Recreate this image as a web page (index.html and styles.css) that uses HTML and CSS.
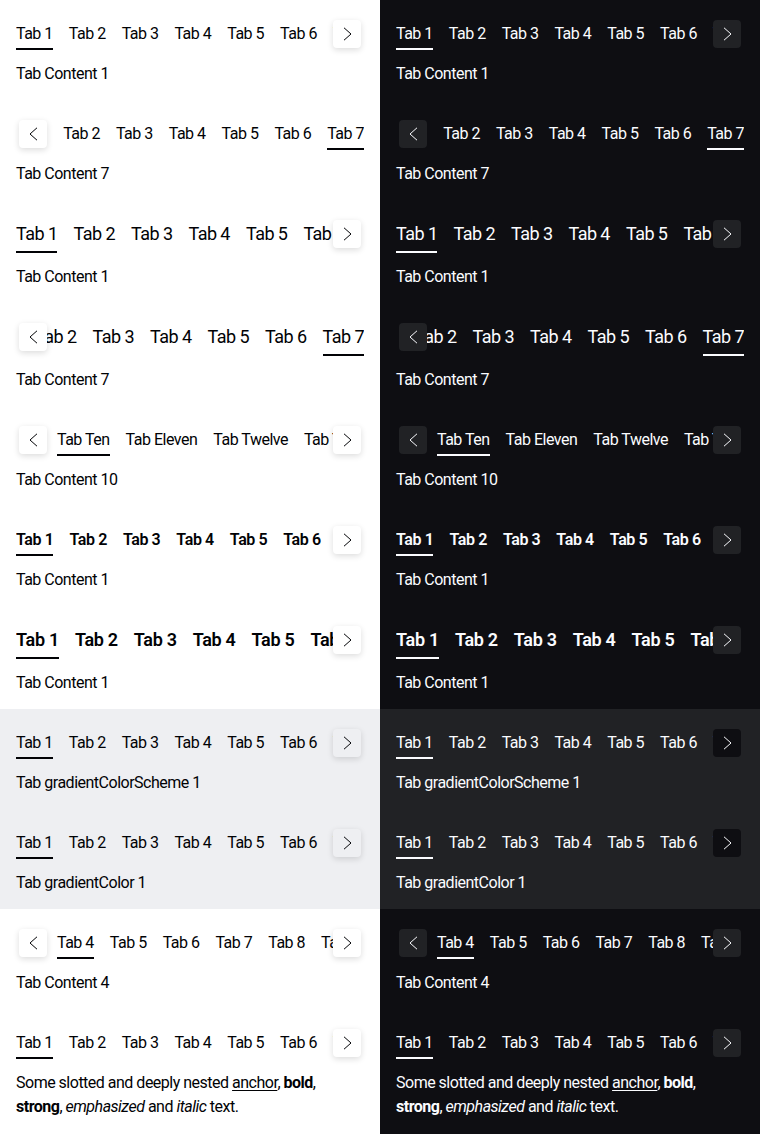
FILE: index.html
```html
<!DOCTYPE html>
<html lang="en">
<head>
<meta charset="utf-8">
<title>Tabs</title>
<link rel="stylesheet" href="styles.css">
</head>
<body>
<div class="page">
  <div class="col theme-light">
    <div class="band">
      <div class="demo">
        <div class="bar">
          <div class="scroller">
            <span class="tab active">Tab 1</span><span class="tab">Tab 2</span><span class="tab">Tab 3</span><span class="tab">Tab 4</span><span class="tab">Tab 5</span><span class="tab">Tab 6</span><span class="tab">Tab 7</span>
          </div>
          <div class="ind ind-next"><span class="btn"><svg width="9" height="14" viewBox="0 0 9 14"><polyline points="1,0.8 8,7 1,13.2" fill="none" stroke="currentColor" stroke-width="1"/></svg></span></div>
        </div>
        <div class="content">Tab Content 1</div>
      </div>
      <div class="demo">
        <div class="bar">
          <div class="scroller end">
            <span class="tab">Tab 1</span><span class="tab">Tab 2</span><span class="tab">Tab 3</span><span class="tab">Tab 4</span><span class="tab">Tab 5</span><span class="tab">Tab 6</span><span class="tab active">Tab 7</span>
          </div>
          <div class="ind ind-prev"><span class="btn"><svg width="9" height="14" viewBox="0 0 9 14"><polyline points="8,0.8 1,7 8,13.2" fill="none" stroke="currentColor" stroke-width="1"/></svg></span></div>
        </div>
        <div class="content">Tab Content 7</div>
      </div>
      <div class="demo">
        <div class="bar medium">
          <div class="scroller">
            <span class="tab active">Tab 1</span><span class="tab">Tab 2</span><span class="tab">Tab 3</span><span class="tab">Tab 4</span><span class="tab">Tab 5</span><span class="tab">Tab 6</span><span class="tab">Tab 7</span>
          </div>
          <div class="ind ind-next"><span class="btn"><svg width="9" height="14" viewBox="0 0 9 14"><polyline points="1,0.8 8,7 1,13.2" fill="none" stroke="currentColor" stroke-width="1"/></svg></span></div>
        </div>
        <div class="content">Tab Content 1</div>
      </div>
      <div class="demo">
        <div class="bar medium">
          <div class="scroller end">
            <span class="tab">Tab 1</span><span class="tab">Tab 2</span><span class="tab">Tab 3</span><span class="tab">Tab 4</span><span class="tab">Tab 5</span><span class="tab">Tab 6</span><span class="tab active">Tab 7</span>
          </div>
          <div class="ind ind-prev"><span class="btn"><svg width="9" height="14" viewBox="0 0 9 14"><polyline points="8,0.8 1,7 8,13.2" fill="none" stroke="currentColor" stroke-width="1"/></svg></span></div>
        </div>
        <div class="content">Tab Content 7</div>
      </div>
      <div class="demo">
        <div class="bar">
          <div class="scroller shifted">
            <span class="tab active">Tab Ten</span><span class="tab">Tab Eleven</span><span class="tab">Tab Twelve</span><span class="tab">Tab Thirteen</span>
          </div>
          <div class="ind ind-prev"><span class="btn"><svg width="9" height="14" viewBox="0 0 9 14"><polyline points="8,0.8 1,7 8,13.2" fill="none" stroke="currentColor" stroke-width="1"/></svg></span></div>
          <div class="ind ind-next"><span class="btn"><svg width="9" height="14" viewBox="0 0 9 14"><polyline points="1,0.8 8,7 1,13.2" fill="none" stroke="currentColor" stroke-width="1"/></svg></span></div>
        </div>
        <div class="content">Tab Content 10</div>
      </div>
      <div class="demo">
        <div class="bar semibold">
          <div class="scroller">
            <span class="tab active">Tab 1</span><span class="tab">Tab 2</span><span class="tab">Tab 3</span><span class="tab">Tab 4</span><span class="tab">Tab 5</span><span class="tab">Tab 6</span><span class="tab">Tab 7</span>
          </div>
          <div class="ind ind-next"><span class="btn"><svg width="9" height="14" viewBox="0 0 9 14"><polyline points="1,0.8 8,7 1,13.2" fill="none" stroke="currentColor" stroke-width="1"/></svg></span></div>
        </div>
        <div class="content">Tab Content 1</div>
      </div>
      <div class="demo">
        <div class="bar medium semibold">
          <div class="scroller">
            <span class="tab active">Tab 1</span><span class="tab">Tab 2</span><span class="tab">Tab 3</span><span class="tab">Tab 4</span><span class="tab">Tab 5</span><span class="tab">Tab 6</span><span class="tab">Tab 7</span>
          </div>
          <div class="ind ind-next"><span class="btn"><svg width="9" height="14" viewBox="0 0 9 14"><polyline points="1,0.8 8,7 1,13.2" fill="none" stroke="currentColor" stroke-width="1"/></svg></span></div>
        </div>
        <div class="content">Tab Content 1</div>
      </div>
    </div>
    <div class="band band-alt">
      <div class="demo">
        <div class="bar">
          <div class="scroller">
            <span class="tab active">Tab 1</span><span class="tab">Tab 2</span><span class="tab">Tab 3</span><span class="tab">Tab 4</span><span class="tab">Tab 5</span><span class="tab">Tab 6</span><span class="tab">Tab 7</span>
          </div>
          <div class="ind ind-next"><span class="btn"><svg width="9" height="14" viewBox="0 0 9 14"><polyline points="1,0.8 8,7 1,13.2" fill="none" stroke="currentColor" stroke-width="1"/></svg></span></div>
        </div>
        <div class="content">Tab gradientColorScheme 1</div>
      </div>
      <div class="demo">
        <div class="bar">
          <div class="scroller">
            <span class="tab active">Tab 1</span><span class="tab">Tab 2</span><span class="tab">Tab 3</span><span class="tab">Tab 4</span><span class="tab">Tab 5</span><span class="tab">Tab 6</span><span class="tab">Tab 7</span>
          </div>
          <div class="ind ind-next"><span class="btn"><svg width="9" height="14" viewBox="0 0 9 14"><polyline points="1,0.8 8,7 1,13.2" fill="none" stroke="currentColor" stroke-width="1"/></svg></span></div>
        </div>
        <div class="content">Tab gradientColor 1</div>
      </div>
    </div>
    <div class="band">
      <div class="demo">
        <div class="bar">
          <div class="scroller shifted">
            <span class="tab active">Tab 4</span><span class="tab">Tab 5</span><span class="tab">Tab 6</span><span class="tab">Tab 7</span><span class="tab">Tab 8</span><span class="tab">Tab 9</span>
          </div>
          <div class="ind ind-prev"><span class="btn"><svg width="9" height="14" viewBox="0 0 9 14"><polyline points="8,0.8 1,7 8,13.2" fill="none" stroke="currentColor" stroke-width="1"/></svg></span></div>
          <div class="ind ind-next"><span class="btn"><svg width="9" height="14" viewBox="0 0 9 14"><polyline points="1,0.8 8,7 1,13.2" fill="none" stroke="currentColor" stroke-width="1"/></svg></span></div>
        </div>
        <div class="content">Tab Content 4</div>
      </div>
      <div class="demo">
        <div class="bar">
          <div class="scroller">
            <span class="tab active">Tab 1</span><span class="tab">Tab 2</span><span class="tab">Tab 3</span><span class="tab">Tab 4</span><span class="tab">Tab 5</span><span class="tab">Tab 6</span><span class="tab">Tab 7</span>
          </div>
          <div class="ind ind-next"><span class="btn"><svg width="9" height="14" viewBox="0 0 9 14"><polyline points="1,0.8 8,7 1,13.2" fill="none" stroke="currentColor" stroke-width="1"/></svg></span></div>
        </div>
        <div class="content rich">Some slotted and deeply nested <a href="#">anchor</a>, <b>bold</b>, <strong>strong</strong>, <em>emphasized</em> and <i>italic</i> text.</div>
      </div>
    </div>
  </div>

  <div class="col theme-dark">
    <div class="band">
      <div class="demo">
        <div class="bar">
          <div class="scroller">
            <span class="tab active">Tab 1</span><span class="tab">Tab 2</span><span class="tab">Tab 3</span><span class="tab">Tab 4</span><span class="tab">Tab 5</span><span class="tab">Tab 6</span><span class="tab">Tab 7</span>
          </div>
          <div class="ind ind-next"><span class="btn"><svg width="9" height="14" viewBox="0 0 9 14"><polyline points="1,0.8 8,7 1,13.2" fill="none" stroke="currentColor" stroke-width="1"/></svg></span></div>
        </div>
        <div class="content">Tab Content 1</div>
      </div>
      <div class="demo">
        <div class="bar">
          <div class="scroller end">
            <span class="tab">Tab 1</span><span class="tab">Tab 2</span><span class="tab">Tab 3</span><span class="tab">Tab 4</span><span class="tab">Tab 5</span><span class="tab">Tab 6</span><span class="tab active">Tab 7</span>
          </div>
          <div class="ind ind-prev"><span class="btn"><svg width="9" height="14" viewBox="0 0 9 14"><polyline points="8,0.8 1,7 8,13.2" fill="none" stroke="currentColor" stroke-width="1"/></svg></span></div>
        </div>
        <div class="content">Tab Content 7</div>
      </div>
      <div class="demo">
        <div class="bar medium">
          <div class="scroller">
            <span class="tab active">Tab 1</span><span class="tab">Tab 2</span><span class="tab">Tab 3</span><span class="tab">Tab 4</span><span class="tab">Tab 5</span><span class="tab">Tab 6</span><span class="tab">Tab 7</span>
          </div>
          <div class="ind ind-next"><span class="btn"><svg width="9" height="14" viewBox="0 0 9 14"><polyline points="1,0.8 8,7 1,13.2" fill="none" stroke="currentColor" stroke-width="1"/></svg></span></div>
        </div>
        <div class="content">Tab Content 1</div>
      </div>
      <div class="demo">
        <div class="bar medium">
          <div class="scroller end">
            <span class="tab">Tab 1</span><span class="tab">Tab 2</span><span class="tab">Tab 3</span><span class="tab">Tab 4</span><span class="tab">Tab 5</span><span class="tab">Tab 6</span><span class="tab active">Tab 7</span>
          </div>
          <div class="ind ind-prev"><span class="btn"><svg width="9" height="14" viewBox="0 0 9 14"><polyline points="8,0.8 1,7 8,13.2" fill="none" stroke="currentColor" stroke-width="1"/></svg></span></div>
        </div>
        <div class="content">Tab Content 7</div>
      </div>
      <div class="demo">
        <div class="bar">
          <div class="scroller shifted">
            <span class="tab active">Tab Ten</span><span class="tab">Tab Eleven</span><span class="tab">Tab Twelve</span><span class="tab">Tab Thirteen</span>
          </div>
          <div class="ind ind-prev"><span class="btn"><svg width="9" height="14" viewBox="0 0 9 14"><polyline points="8,0.8 1,7 8,13.2" fill="none" stroke="currentColor" stroke-width="1"/></svg></span></div>
          <div class="ind ind-next"><span class="btn"><svg width="9" height="14" viewBox="0 0 9 14"><polyline points="1,0.8 8,7 1,13.2" fill="none" stroke="currentColor" stroke-width="1"/></svg></span></div>
        </div>
        <div class="content">Tab Content 10</div>
      </div>
      <div class="demo">
        <div class="bar semibold">
          <div class="scroller">
            <span class="tab active">Tab 1</span><span class="tab">Tab 2</span><span class="tab">Tab 3</span><span class="tab">Tab 4</span><span class="tab">Tab 5</span><span class="tab">Tab 6</span><span class="tab">Tab 7</span>
          </div>
          <div class="ind ind-next"><span class="btn"><svg width="9" height="14" viewBox="0 0 9 14"><polyline points="1,0.8 8,7 1,13.2" fill="none" stroke="currentColor" stroke-width="1"/></svg></span></div>
        </div>
        <div class="content">Tab Content 1</div>
      </div>
      <div class="demo">
        <div class="bar medium semibold">
          <div class="scroller">
            <span class="tab active">Tab 1</span><span class="tab">Tab 2</span><span class="tab">Tab 3</span><span class="tab">Tab 4</span><span class="tab">Tab 5</span><span class="tab">Tab 6</span><span class="tab">Tab 7</span>
          </div>
          <div class="ind ind-next"><span class="btn"><svg width="9" height="14" viewBox="0 0 9 14"><polyline points="1,0.8 8,7 1,13.2" fill="none" stroke="currentColor" stroke-width="1"/></svg></span></div>
        </div>
        <div class="content">Tab Content 1</div>
      </div>
    </div>
    <div class="band band-alt">
      <div class="demo">
        <div class="bar">
          <div class="scroller">
            <span class="tab active">Tab 1</span><span class="tab">Tab 2</span><span class="tab">Tab 3</span><span class="tab">Tab 4</span><span class="tab">Tab 5</span><span class="tab">Tab 6</span><span class="tab">Tab 7</span>
          </div>
          <div class="ind ind-next"><span class="btn"><svg width="9" height="14" viewBox="0 0 9 14"><polyline points="1,0.8 8,7 1,13.2" fill="none" stroke="currentColor" stroke-width="1"/></svg></span></div>
        </div>
        <div class="content">Tab gradientColorScheme 1</div>
      </div>
      <div class="demo">
        <div class="bar">
          <div class="scroller">
            <span class="tab active">Tab 1</span><span class="tab">Tab 2</span><span class="tab">Tab 3</span><span class="tab">Tab 4</span><span class="tab">Tab 5</span><span class="tab">Tab 6</span><span class="tab">Tab 7</span>
          </div>
          <div class="ind ind-next"><span class="btn"><svg width="9" height="14" viewBox="0 0 9 14"><polyline points="1,0.8 8,7 1,13.2" fill="none" stroke="currentColor" stroke-width="1"/></svg></span></div>
        </div>
        <div class="content">Tab gradientColor 1</div>
      </div>
    </div>
    <div class="band">
      <div class="demo">
        <div class="bar">
          <div class="scroller shifted">
            <span class="tab active">Tab 4</span><span class="tab">Tab 5</span><span class="tab">Tab 6</span><span class="tab">Tab 7</span><span class="tab">Tab 8</span><span class="tab">Tab 9</span>
          </div>
          <div class="ind ind-prev"><span class="btn"><svg width="9" height="14" viewBox="0 0 9 14"><polyline points="8,0.8 1,7 8,13.2" fill="none" stroke="currentColor" stroke-width="1"/></svg></span></div>
          <div class="ind ind-next"><span class="btn"><svg width="9" height="14" viewBox="0 0 9 14"><polyline points="1,0.8 8,7 1,13.2" fill="none" stroke="currentColor" stroke-width="1"/></svg></span></div>
        </div>
        <div class="content">Tab Content 4</div>
      </div>
      <div class="demo">
        <div class="bar">
          <div class="scroller">
            <span class="tab active">Tab 1</span><span class="tab">Tab 2</span><span class="tab">Tab 3</span><span class="tab">Tab 4</span><span class="tab">Tab 5</span><span class="tab">Tab 6</span><span class="tab">Tab 7</span>
          </div>
          <div class="ind ind-next"><span class="btn"><svg width="9" height="14" viewBox="0 0 9 14"><polyline points="1,0.8 8,7 1,13.2" fill="none" stroke="currentColor" stroke-width="1"/></svg></span></div>
        </div>
        <div class="content rich">Some slotted and deeply nested <a href="#">anchor</a>, <b>bold</b>, <strong>strong</strong>, <em>emphasized</em> and <i>italic</i> text.</div>
      </div>
    </div>
  </div>
</div>
</body>
</html>
```

FILE: styles.css
```css
* { box-sizing: border-box; }

html, body {
  margin: 0;
  padding: 0;
}

body {
  font-family: Roboto, "Liberation Sans", Arial, sans-serif;
  font-size: 16px;
  line-height: 24px;
  letter-spacing: -0.5px;
}

.page {
  display: grid;
  grid-template-columns: 380px 380px;
  min-height: 1134px;
}

.theme-light {
  --bg: #ffffff;
  --fg: #010205;
  --btn: #ffffff;
  --shadow: 0 2px 6px rgba(0, 0, 0, 0.14);
  background: var(--bg);
  color: var(--fg);
}

.theme-light .band-alt {
  --bg: #eeeff2;
  --btn: #eeeff2;
}

.theme-dark {
  --bg: #0e0e12;
  --fg: #fbfcff;
  --btn: #212225;
  --shadow: none;
  background: var(--bg);
  color: var(--fg);
}

.theme-dark .band-alt {
  --bg: #212225;
  --btn: #0e0e12;
}

.band {
  background: var(--bg);
}

.demo {
  padding: 16px 16px 14px;
}

.bar {
  position: relative;
  height: 34px;
}

.bar.medium {
  height: 37px;
}

.scroller {
  display: flex;
  gap: 16px;
  overflow: hidden;
  height: 100%;
  white-space: nowrap;
}

.scroller.end {
  justify-content: flex-end;
}

.scroller.shifted {
  padding-left: 41px;
}

.tab {
  flex: 0 0 auto;
  display: block;
  padding-top: 6px;
  padding-bottom: 2px;
  line-height: 24px;
  border-bottom: 2px solid transparent;
  font-size: 16px;
}

.medium .tab {
  font-size: 18px;
  line-height: 26px;
  padding-top: 5px;
  padding-bottom: 4px;
  letter-spacing: -0.55px;
}

.semibold .tab {
  font-weight: 600;
  letter-spacing: -0.4px;
}

.medium.semibold .tab {
  letter-spacing: -0.3px;
}

.tab.active {
  border-bottom-color: var(--fg);
}

.ind {
  position: absolute;
  top: 0;
  bottom: 0;
  width: 31px;
  background: var(--bg);
}

.ind-next {
  right: 0;
  padding-right: 3px;
}

.ind-prev {
  left: 0;
  padding-left: 3px;
}

.btn {
  display: flex;
  align-items: center;
  justify-content: center;
  width: 28px;
  height: 28px;
  margin-top: 4px;
  border-radius: 4px;
  background: var(--btn);
  box-shadow: var(--shadow);
  color: var(--fg);
}

.content {
  margin-top: 12px;
  font-size: 16px;
  line-height: 24px;
}

.content a {
  color: inherit;
  text-decoration: underline;
  text-underline-offset: 2px;
}

.content b,
.content strong {
  font-weight: 700;
}
```
